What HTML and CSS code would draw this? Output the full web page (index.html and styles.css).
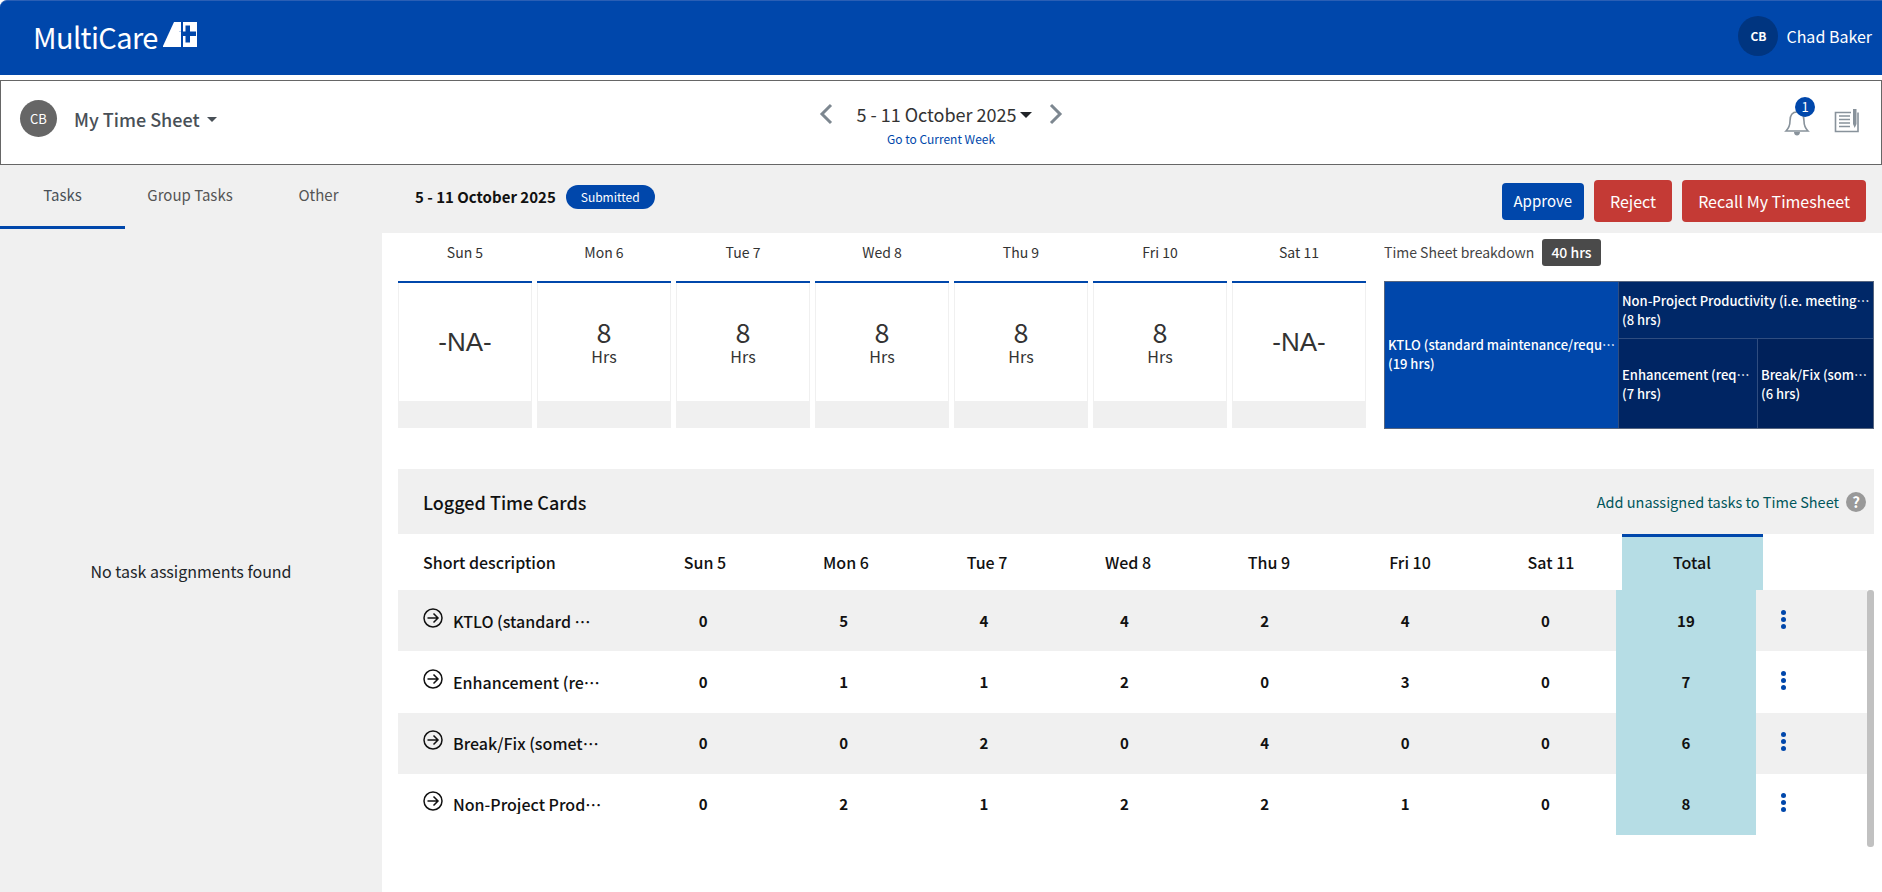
FILE: index.html
```html
<!DOCTYPE html>
<html lang="en">
<head>
    <meta charset="UTF-8">
    <meta name="viewport" content="width=device-width, initial-scale=1.0">
    <title>My Time Sheet</title>
    <link rel="stylesheet" href="styles.css">
</head>
<body>
<header class="topbar">
    <div class="logo">
        <span class="logo-text">MultiCare</span>
        <svg class="logo-mark" width="34" height="25" viewBox="0 0 34 25">
            <path fill="#fff" d="M11 0H18V25H0V24Z"/>
            <path fill="#fff" d="M20 0H34V25H20Z"/>
            <path fill="#0047ab" d="M22.5 3.5H27V9.5H33V14H27V20.5H22.5V14H16V9.5H22.5Z"/>
            <path fill="#fff" d="M12 9.5H18V14H12Z"/>
        </svg>
    </div>
    <div class="user">
        <span class="user-avatar">CB</span>
        <span class="user-name">Chad Baker</span>
    </div>
</header>

<section class="subbar">
    <div class="subbar-left">
        <span class="avatar">CB</span>
        <span class="sheet-title">My Time Sheet</span>
        <span class="caret caret-grey"></span>
    </div>
    <div class="week-picker">
        <div class="week-row">
            <svg class="chevron" width="16" height="22" viewBox="0 0 16 22"><path d="M13 2L4 11L13 20" fill="none" stroke="#7d8790" stroke-width="3"/></svg>
            <span class="week-label">5 - 11 October 2025</span>
            <span class="caret caret-dark"></span>
            <svg class="chevron" width="16" height="22" viewBox="0 0 16 22"><path d="M3 2L12 11L3 20" fill="none" stroke="#7d8790" stroke-width="3"/></svg>
        </div>
        <a class="current-week">Go to Current Week</a>
    </div>
    <div class="subbar-icons">
        <div class="bell">
            <svg width="26" height="28" viewBox="0 0 26 28">
                <path d="M13 3C8 3 6 7 6 12C6 17 4 20 2 22H24C22 20 20 17 20 12C20 7 18 3 13 3Z" fill="none" stroke="#88929b" stroke-width="1.6"/>
                <path d="M10 23H16C16 25.5 14.5 26.5 13 26.5C11.5 26.5 10 25.5 10 23Z" fill="#88929b"/>
            </svg>
            <span class="bell-badge">1</span>
        </div>
        <svg width="26" height="26" viewBox="0 0 26 26">
            <path d="M4 5.5H17M4 5.5H1.5V24.5H24V5.5" fill="none" stroke="#88929b" stroke-width="1.6"/>
            <path d="M5 9H16M5 12.5H16M5 16H16M5 19.5H16" stroke="#88929b" stroke-width="1.6"/>
            <path d="M19 2H22.5V17L20.7 21L19 17Z" fill="#88929b"/>
        </svg>
    </div>
</section>

<div class="layout">
    <aside class="sidebar">
        <nav class="tabs">
            <a class="tab tab-active">Tasks</a>
            <a class="tab">Group Tasks</a>
            <a class="tab">Other</a>
        </nav>
        <div class="empty">No task assignments found</div>
    </aside>

    <main class="content">
        <div class="toolbar">
            <div class="toolbar-left">
                <strong>5 - 11 October 2025</strong>
                <span class="status">Submitted</span>
            </div>
            <div class="toolbar-actions">
                <button class="btn btn-blue">Approve</button>
                <button class="btn btn-red">Reject</button>
                <button class="btn btn-red">Recall My Timesheet</button>
            </div>
        </div>

        <div class="panel">
            <div class="summary">
                <div class="days">
                    <div class="day">
                        <div class="day-name">Sun 5</div>
                        <div class="day-card"><div class="day-body"><span class="day-na">-NA-</span></div><div class="day-foot"></div></div>
                    </div>
                    <div class="day">
                        <div class="day-name">Mon 6</div>
                        <div class="day-card"><div class="day-body"><span class="day-num">8</span><span class="day-unit">Hrs</span></div><div class="day-foot"></div></div>
                    </div>
                    <div class="day">
                        <div class="day-name">Tue 7</div>
                        <div class="day-card"><div class="day-body"><span class="day-num">8</span><span class="day-unit">Hrs</span></div><div class="day-foot"></div></div>
                    </div>
                    <div class="day">
                        <div class="day-name">Wed 8</div>
                        <div class="day-card"><div class="day-body"><span class="day-num">8</span><span class="day-unit">Hrs</span></div><div class="day-foot"></div></div>
                    </div>
                    <div class="day">
                        <div class="day-name">Thu 9</div>
                        <div class="day-card"><div class="day-body"><span class="day-num">8</span><span class="day-unit">Hrs</span></div><div class="day-foot"></div></div>
                    </div>
                    <div class="day">
                        <div class="day-name">Fri 10</div>
                        <div class="day-card"><div class="day-body"><span class="day-num">8</span><span class="day-unit">Hrs</span></div><div class="day-foot"></div></div>
                    </div>
                    <div class="day">
                        <div class="day-name">Sat 11</div>
                        <div class="day-card"><div class="day-body"><span class="day-na">-NA-</span></div><div class="day-foot"></div></div>
                    </div>
                </div>
                <div class="breakdown">
                    <div class="breakdown-head">
                        <span>Time Sheet breakdown</span>
                        <span class="hours-badge">40 hrs</span>
                    </div>
                    <div class="treemap">
                        <div class="tile tile-main"><span class="clip">KTLO (standard maintenance/request)</span>(19 hrs)</div>
                        <div class="tile-stack">
                            <div class="tile tile-top"><span class="clip">Non-Project Productivity (i.e. meetings, training)</span>(8 hrs)</div>
                            <div class="tile-pair">
                                <div class="tile tile-left"><span class="clip">Enhancement (request)</span>(7 hrs)</div>
                                <div class="tile tile-right"><span class="clip">Break/Fix (something)</span>(6 hrs)</div>
                            </div>
                        </div>
                    </div>
                </div>
            </div>

            <section class="cards">
                <div class="cards-head">
                    <h2>Logged Time Cards</h2>
                    <div class="cards-link">
                        <a>Add unassigned tasks to Time Sheet</a>
                        <span class="help">?</span>
                    </div>
                </div>
                <div class="table-head">
                    <div class="head-desc">Short description</div>
                    <div>Sun 5</div>
                    <div>Mon 6</div>
                    <div>Tue 7</div>
                    <div>Wed 8</div>
                    <div>Thu 9</div>
                    <div>Fri 10</div>
                    <div>Sat 11</div>
                    <div class="head-total">Total</div>
                </div>
                <div class="table-wrap">
                    <div class="table-body">
                        <div class="row">
                            <div class="desc"><svg class="go" width="20" height="20" viewBox="0 0 20 20"><circle cx="10" cy="10" r="9" fill="none" stroke="#111" stroke-width="1.5"/><path d="M4.5 10H15M10.5 5.5L15 10L10.5 14.5" fill="none" stroke="#111" stroke-width="1.5"/></svg><span class="desc-text">KTLO (standard maintenance)</span></div>
                            <div>0</div><div>5</div><div>4</div><div>4</div><div>2</div><div>4</div><div>0</div>
                            <div class="total">19</div>
                            <div class="more"><i></i><i></i><i></i></div>
                        </div>
                        <div class="row">
                            <div class="desc"><svg class="go" width="20" height="20" viewBox="0 0 20 20"><circle cx="10" cy="10" r="9" fill="none" stroke="#111" stroke-width="1.5"/><path d="M4.5 10H15M10.5 5.5L15 10L10.5 14.5" fill="none" stroke="#111" stroke-width="1.5"/></svg><span class="desc-text">Enhancement (request)</span></div>
                            <div>0</div><div>1</div><div>1</div><div>2</div><div>0</div><div>3</div><div>0</div>
                            <div class="total">7</div>
                            <div class="more"><i></i><i></i><i></i></div>
                        </div>
                        <div class="row">
                            <div class="desc"><svg class="go" width="20" height="20" viewBox="0 0 20 20"><circle cx="10" cy="10" r="9" fill="none" stroke="#111" stroke-width="1.5"/><path d="M4.5 10H15M10.5 5.5L15 10L10.5 14.5" fill="none" stroke="#111" stroke-width="1.5"/></svg><span class="desc-text">Break/Fix (something broken)</span></div>
                            <div>0</div><div>0</div><div>2</div><div>0</div><div>4</div><div>0</div><div>0</div>
                            <div class="total">6</div>
                            <div class="more"><i></i><i></i><i></i></div>
                        </div>
                        <div class="row">
                            <div class="desc"><svg class="go" width="20" height="20" viewBox="0 0 20 20"><circle cx="10" cy="10" r="9" fill="none" stroke="#111" stroke-width="1.5"/><path d="M4.5 10H15M10.5 5.5L15 10L10.5 14.5" fill="none" stroke="#111" stroke-width="1.5"/></svg><span class="desc-text">Non-Project Productivity</span></div>
                            <div>0</div><div>2</div><div>1</div><div>2</div><div>2</div><div>1</div><div>0</div>
                            <div class="total">8</div>
                            <div class="more"><i></i><i></i><i></i></div>
                        </div>
                    </div>
                    <div class="scroll-thumb"></div>
                </div>
            </section>
        </div>
    </main>
</div>
</body>
</html>
```

FILE: styles.css
```css
* {
    box-sizing: border-box;
}

html, body {
    height: 100%;
}

body {
    margin: 0;
    display: flex;
    flex-direction: column;
    overflow: hidden;
    font-family: "Noto Sans CJK SC", "Open Sans", sans-serif;
    font-size: 14px;
    line-height: 20px;
    color: #212529;
    background-color: #fff;
}

a {
    text-decoration: none;
}

/* top blue bar */
.topbar {
    height: 75px;
    flex: none;
    display: flex;
    align-items: center;
    justify-content: space-between;
    padding: 0 10px 0 33px;
    background: #0047ab;
    border-top: 1px solid #2a5fb5;
    border-top-left-radius: 7px;
    color: #fff;
}

.logo {
    display: flex;
    align-items: center;
    gap: 5px;
    margin-top: -4px;
}

.logo-text {
    font-size: 29px;
    line-height: 30px;
    letter-spacing: -0.6px;
}

.logo-mark {
    margin-top: -4px;
}

.user {
    display: flex;
    align-items: center;
    gap: 8px;
    margin-top: -1px;
    margin-bottom: 3px;
}

.user-avatar {
    width: 40px;
    height: 40px;
    border-radius: 50%;
    display: flex;
    align-items: center;
    justify-content: center;
    background: #003580;
    font-size: 12px;
    font-weight: 700;
}

.user-name {
    font-size: 16px;
}

/* white bar with the week picker */
.subbar {
    height: 85px;
    flex: none;
    margin-top: 5px;
    display: grid;
    grid-template-columns: 1fr auto 1fr;
    background: #fff;
    border: 1px solid #666;
}

.subbar-left {
    display: flex;
    align-items: flex-start;
    padding: 19px 0 0 19px;
}

.avatar {
    width: 37px;
    height: 37px;
    border-radius: 50%;
    display: flex;
    align-items: center;
    justify-content: center;
    background: #666;
    color: #fff;
    font-size: 13px;
}

.sheet-title {
    margin: 7px 7px 0 17px;
    font-size: 18px;
    line-height: 24px;
    font-weight: 500;
    color: #495057;
}

.caret {
    width: 0;
    height: 0;
    border-left: 5.5px solid transparent;
    border-right: 5.5px solid transparent;
}

.caret-grey {
    margin-top: 17px;
    border-top: 5px solid #495057;
}

.caret-dark {
    margin: 1px 16px 0 3px;
    border-left-width: 6.5px;
    border-right-width: 6.5px;
    border-top: 6px solid #212529;
}

.week-picker {
    display: flex;
    flex-direction: column;
    align-items: center;
    padding-top: 20px;
}

.week-row {
    display: flex;
    align-items: center;
}

.chevron:first-child {
    margin-right: 22px;
}

.week-label {
    font-size: 18px;
    line-height: 26px;
    color: #333;
}

.current-week {
    margin-top: 4px;
    font-size: 12px;
    line-height: 16px;
    color: #0047ab;
}

.subbar-icons {
    display: flex;
    justify-content: flex-end;
    align-items: flex-start;
    gap: 24px;
    padding: 26px 21px 0 0;
}

.bell {
    position: relative;
    margin-top: 2px;
}

.bell-badge {
    position: absolute;
    top: -12px;
    left: 11px;
    width: 20px;
    height: 20px;
    border-radius: 50%;
    display: flex;
    align-items: center;
    justify-content: center;
    background: #0047ab;
    color: #fff;
    font-size: 13px;
}

/* below the bars */
.layout {
    flex: 1;
    min-height: 0;
    display: flex;
}

.sidebar {
    width: 382px;
    flex: none;
    display: flex;
    flex-direction: column;
    background: #f0f0f0;
}

.tabs {
    display: flex;
    height: 64px;
    flex: none;
}

.tab {
    height: 64px;
    padding-top: 20px;
    text-align: center;
    color: #555;
    font-size: 15px;
}

.tab:nth-child(1) {
    width: 125px;
}

.tab:nth-child(2) {
    width: 130px;
}

.tab:nth-child(3) {
    width: 127px;
}

.tab-active {
    color: #495057;
    border-bottom: 3px solid #0047ab;
}

.empty {
    margin-top: 331px;
    text-align: center;
    font-size: 16px;
    line-height: 22px;
    color: #212529;
}

.content {
    flex: 1;
    min-width: 0;
    display: flex;
    flex-direction: column;
}

.toolbar {
    height: 68px;
    flex: none;
    display: flex;
    align-items: flex-start;
    justify-content: space-between;
    padding: 15px 16px 0 33px;
    background: #f0f0f0;
}

.toolbar-left {
    display: flex;
    align-items: center;
    gap: 10px;
    margin-top: 5px;
    font-size: 15px;
    color: #111;
}

.status {
    height: 24px;
    padding: 0 15px;
    border-radius: 12px;
    background: #0047ab;
    color: #fff;
    font-size: 12px;
    line-height: 23px;
}

.toolbar-actions {
    display: flex;
    align-items: center;
    gap: 10px;
}

.btn {
    font-family: inherit;
    font-size: 16px;
    line-height: 22px;
    color: #fff;
    border: 0;
    border-radius: 4px;
    padding: 0 16px;
    height: 42px;
}

.btn-blue {
    height: 37px;
    padding: 0 12px;
    font-size: 15px;
    background: #0047ab;
}

.btn-red {
    background: #c43a35;
}

.panel {
    flex: 1;
    padding-left: 16px;
    padding-right: 8px;
    background: #fff;
}

/* seven day cards and the treemap */
.summary {
    display: flex;
    height: 196px;
}

.days {
    display: flex;
    gap: 5px;
}

.day {
    width: 134px;
}

.day-name {
    height: 48px;
    padding-top: 9px;
    text-align: center;
    font-size: 14px;
    color: #333;
}

.day-card {
    height: 147px;
    display: flex;
    flex-direction: column;
    border-top: 2px solid #0047ab;
}

.day-body {
    height: 118px;
    display: flex;
    flex-direction: column;
    align-items: center;
    justify-content: center;
    border: 1px solid #f0f0f0;
    border-top: 0;
    border-bottom: 0;
    color: #333;
}

.day-na {
    font-family: "Liberation Sans", sans-serif;
    font-size: 26px;
    line-height: 30px;
}

.day-num {
    font-size: 27px;
    line-height: 28px;
}

.day-unit {
    font-size: 16px;
    line-height: 20px;
}

.day-foot {
    height: 27px;
    background: #f0f0f0;
}

.breakdown {
    width: 490px;
    margin-left: 18px;
}

.breakdown-head {
    height: 48px;
    display: flex;
    align-items: flex-start;
    gap: 8px;
    padding-top: 6px;
    font-size: 14px;
    line-height: 27px;
    color: #444;
}

.hours-badge {
    height: 27px;
    padding: 0 9px;
    border-radius: 3px;
    background: #4a4a4a;
    color: #fff;
    font-weight: 500;
}

.treemap {
    display: flex;
    height: 148px;
    border: 1px solid #56657f;
    color: #fff;
    font-size: 13px;
    font-weight: 500;
    line-height: 19px;
}

.tile {
    display: flex;
    flex-direction: column;
    justify-content: center;
    min-width: 0;
    padding: 0 2px 0 3px;
}

.clip {
    white-space: nowrap;
    overflow: hidden;
    text-overflow: ellipsis;
}

.tile-main {
    width: 233px;
    flex: none;
    background: #0047ab;
    padding-bottom: 2px;
}

.tile-stack {
    flex: 1;
    min-width: 0;
    display: flex;
    flex-direction: column;
}

.tile-top {
    height: 57px;
    flex: none;
    background: #002868;
    border-left: 1px solid #2f4d80;
    border-bottom: 1px solid #2f4d80;
}

.tile-pair {
    flex: 1;
    display: flex;
    min-height: 0;
}

.tile-left {
    width: 139px;
    flex: none;
    background: #002563;
    border-left: 1px solid #2f4d80;
}

.tile-right {
    flex: 1;
    background: #00215a;
    border-left: 1px solid #2f4d80;
}

/* logged time cards */
.cards {
    margin-top: 40px;
    width: 1476px;
}

.cards-head {
    height: 65px;
    display: flex;
    align-items: center;
    justify-content: space-between;
    padding: 0 8px 0 25px;
    background: #f0f0f0;
}

.cards-head h2 {
    margin: 0;
    font-size: 18px;
    font-weight: 500;
    color: #111;
}

.cards-link {
    display: flex;
    align-items: center;
    gap: 7px;
    font-size: 14.5px;
    color: #00565b;
}

.help {
    width: 20px;
    height: 20px;
    border-radius: 50%;
    display: flex;
    align-items: center;
    justify-content: center;
    background: #999;
    color: #fff;
    font-size: 15px;
    font-weight: 700;
}

.table-head {
    height: 56px;
    display: grid;
    grid-template-columns: 236.5px repeat(8, 141px) 1fr;
    align-items: center;
    text-align: center;
    font-size: 16px;
    font-weight: 500;
    color: #111;
}

.table-head .head-desc {
    text-align: left;
    padding-left: 25px;
}

.table-head .head-total {
    height: 56px;
    padding-top: 15px;
    background: #b6dde5;
    border-top: 3px solid #0047ab;
}

.table-wrap {
    display: flex;
}

.table-body {
    width: 1469px;
    flex: none;
}

.scroll-thumb {
    width: 7px;
    height: 257px;
    border-radius: 3px;
    background: #c1c1c1;
}

.row {
    height: 61.25px;
    display: grid;
    grid-template-columns: 235px repeat(8, 140.4px) 1fr;
    align-items: center;
    text-align: center;
    font-size: 15px;
    font-weight: 700;
    color: #111;
}

.row:nth-child(odd) {
    background: #f0f0f0;
}

.desc {
    display: flex;
    align-items: center;
    padding-left: 25px;
    text-align: left;
}

.go {
    flex: none;
    margin: -6px 10px 0 0;
}

.desc-text {
    width: 150px;
    white-space: nowrap;
    overflow: hidden;
    text-overflow: ellipsis;
    font-size: 16px;
    font-weight: 500;
}

.total {
    height: 100%;
    display: flex;
    align-items: center;
    justify-content: center;
    background: #b6dde5;
}

.more {
    display: flex;
    flex-direction: column;
    align-items: center;
    gap: 2px;
    width: 54px;
    margin-top: -3px;
}

.more i {
    width: 5px;
    height: 5px;
    border-radius: 50%;
    background: #0047ab;
}
```
